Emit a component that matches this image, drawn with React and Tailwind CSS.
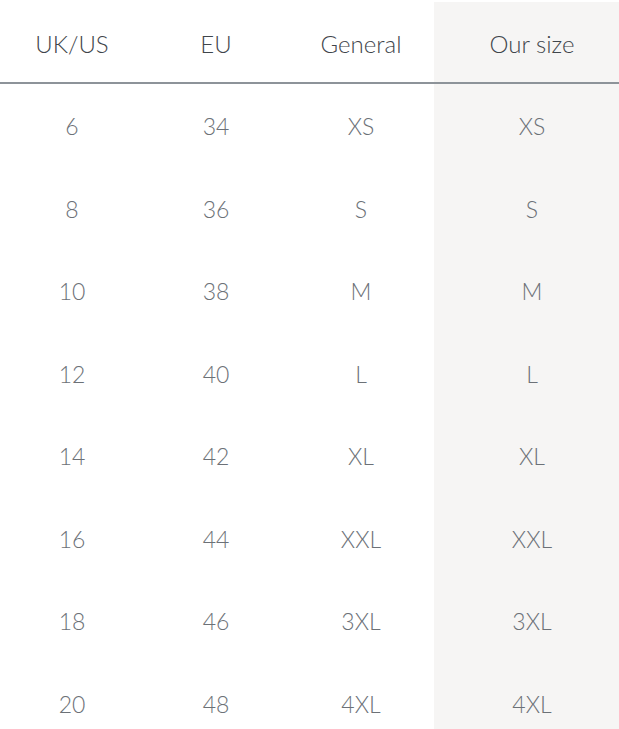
const rows = [
  ['6', '34', 'XS'],
  ['8', '36', 'S'],
  ['10', '38', 'M'],
  ['12', '40', 'L'],
  ['14', '42', 'XL'],
  ['16', '44', 'XXL'],
  ['18', '46', '3XL'],
  ['20', '48', '4XL'],
];

export default function App() {
  return (
    <div className="h-[729px] overflow-hidden bg-white pt-[2px] font-['Lato',sans-serif]">
      {/* Header */}
      <div className="grid h-[82px] grid-cols-[144px_144px_146px_1fr] items-center border-b-2 border-[#8d9399] pt-[3px] text-[24px] font-light text-[#3f454b]">
        <div className="text-center">UK/US</div>
        <div className="text-center">EU</div>
        <div className="text-center">General</div>
        <div className="-mt-[3px] flex h-[calc(100%+3px)] items-center justify-center bg-[#f6f5f4] pl-[11px] pt-[3px]">Our size</div>
      </div>

      {/* Rows */}
      {rows.map(([uk, eu, gen]) => (
        <div
          key={uk}
          className="grid h-[82.5px] grid-cols-[144px_144px_146px_1fr] items-center pt-[2px] text-[23px] font-light text-[#6c7177]"
        >
          <div className="text-center">{uk}</div>
          <div className="text-center">{eu}</div>
          <div className="text-center">{gen}</div>
          <div className="-mt-[2px] flex h-[calc(100%+2px)] items-center justify-center bg-[#f6f5f4] pl-[11px] pt-[2px]">{gen}</div>
        </div>
      ))}
    </div>
  );
}
